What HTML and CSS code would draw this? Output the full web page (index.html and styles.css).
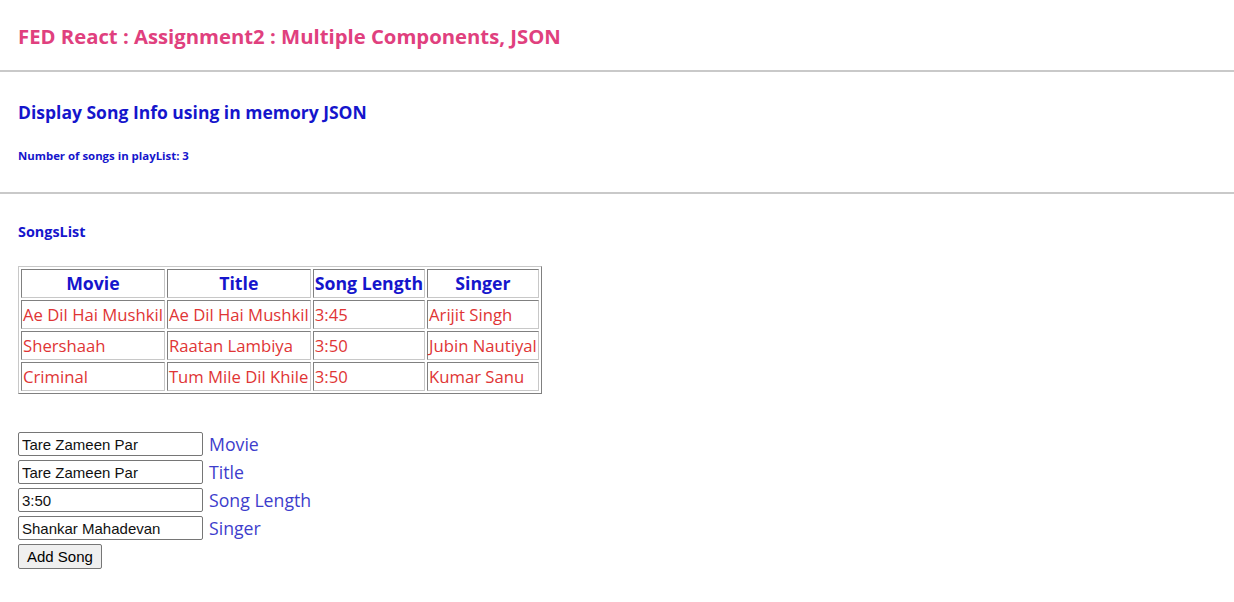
FILE: index.html
```html
<!DOCTYPE html>
<html>
<head>
<meta charset="utf-8">
<title>FED React Assignment2</title>
<link rel="stylesheet" href="styles.css">
</head>
<body>
<header class="app-header">
  <h1 class="app-title">FED React : Assignment2 : Multiple Components, JSON</h1>
</header>
<hr class="divider">
<section class="info">
  <h2 class="info-title">Display Song Info using in memory JSON</h2>
  <p class="info-count">Number of songs in playList: 3</p>
</section>
<hr class="divider">
<section class="songs">
  <h3 class="songs-title">SongsList</h3>
  <table class="songs-table">
    <thead>
      <tr><th>Movie</th><th>Title</th><th>Song Length</th><th>Singer</th></tr>
    </thead>
    <tbody>
      <tr><td>Ae Dil Hai Mushkil</td><td>Ae Dil Hai Mushkil</td><td>3:45</td><td>Arijit Singh</td></tr>
      <tr><td>Shershaah</td><td>Raatan Lambiya</td><td>3:50</td><td>Jubin Nautiyal</td></tr>
      <tr><td>Criminal</td><td>Tum Mile Dil Khile</td><td>3:50</td><td>Kumar Sanu</td></tr>
    </tbody>
  </table>
  <form class="song-form">
    <div class="form-row"><input class="form-input" type="text" value="Tare Zameen Par"><span class="form-label">Movie</span></div>
    <div class="form-row"><input class="form-input" type="text" value="Tare Zameen Par"><span class="form-label">Title</span></div>
    <div class="form-row"><input class="form-input" type="text" value="3:50"><span class="form-label">Song Length</span></div>
    <div class="form-row"><input class="form-input" type="text" value="Shankar Mahadevan"><span class="form-label">Singer</span></div>
    <div class="form-row form-row-button"><button class="form-button" type="button">Add Song</button></div>
  </form>
</section>
</body>
</html>
```
FILE: styles.css
```css
html, body {
  margin: 0;
  padding: 0;
  background: #ffffff;
}
body {
  font-family: "Open Sans", "Noto Sans", sans-serif;
}
.app-header {
  padding: 22px 18px 0 18px;
  height: 48px;
}
.app-title {
  margin: 0;
  font-size: 20.3px;
  line-height: 28px;
  font-weight: 700;
  color: #e0407e;
}
.divider {
  margin: 0;
  border: 0;
  height: 2px;
  background: #c9c9c9;
}
.info {
  padding: 0 18px;
  height: 120px;
}
.info-title {
  margin: 0;
  padding-top: 28px;
  font-size: 17.5px;
  line-height: 24px;
  font-weight: 700;
  color: #1515cc;
}
.info-count {
  margin: 24px 0 0 0;
  font-size: 11.4px;
  line-height: 16px;
  font-weight: 700;
  color: #1515cc;
}
.songs {
  padding: 0 18px;
}
.songs-title {
  margin: 0;
  padding-top: 28px;
  font-size: 14.4px;
  line-height: 20px;
  font-weight: 700;
  color: #1515cc;
}
.songs-table {
  margin-top: 24px;
  border: 1px solid;
  border-color: #c8c8c8 #808080 #808080 #c8c8c8;
  border-spacing: 2px;
}
.songs-table th,
.songs-table td {
  border: 1px solid;
  border-color: #808080 #c8c8c8 #c8c8c8 #808080;
  padding: 1px;
  font-size: 16.7px;
  line-height: 25px;
  white-space: nowrap;
}
.songs-table th {
  color: #1515cc;
  font-size: 17.7px;
  font-weight: 700;
  text-align: center;
}
.songs-table td {
  color: #e03535;
  text-align: left;
}
.song-form {
  margin-top: 38px;
  display: flex;
  flex-direction: column;
  gap: 4px;
}
.form-row {
  display: flex;
  align-items: center;
  gap: 6px;
  height: 24px;
}
.form-row-button {
  height: 25px;
}
.form-input {
  box-sizing: border-box;
  width: 185px;
  height: 24px;
  margin: 0;
  padding: 1px 3px;
  border: 1px solid #767676;
  border-radius: 2px;
  font-family: "Liberation Sans", Arial, sans-serif;
  font-size: 15px;
  color: #111;
}
.form-label {
  font-size: 17.7px;
  color: #3d3dcc;
}
.form-button {
  box-sizing: border-box;
  height: 25px;
  margin: 0;
  padding: 1px 8px;
  border: 1px solid #767676;
  border-radius: 2px;
  background: #efefef;
  font-family: "Liberation Sans", Arial, sans-serif;
  font-size: 15px;
  color: #000;
}
```
